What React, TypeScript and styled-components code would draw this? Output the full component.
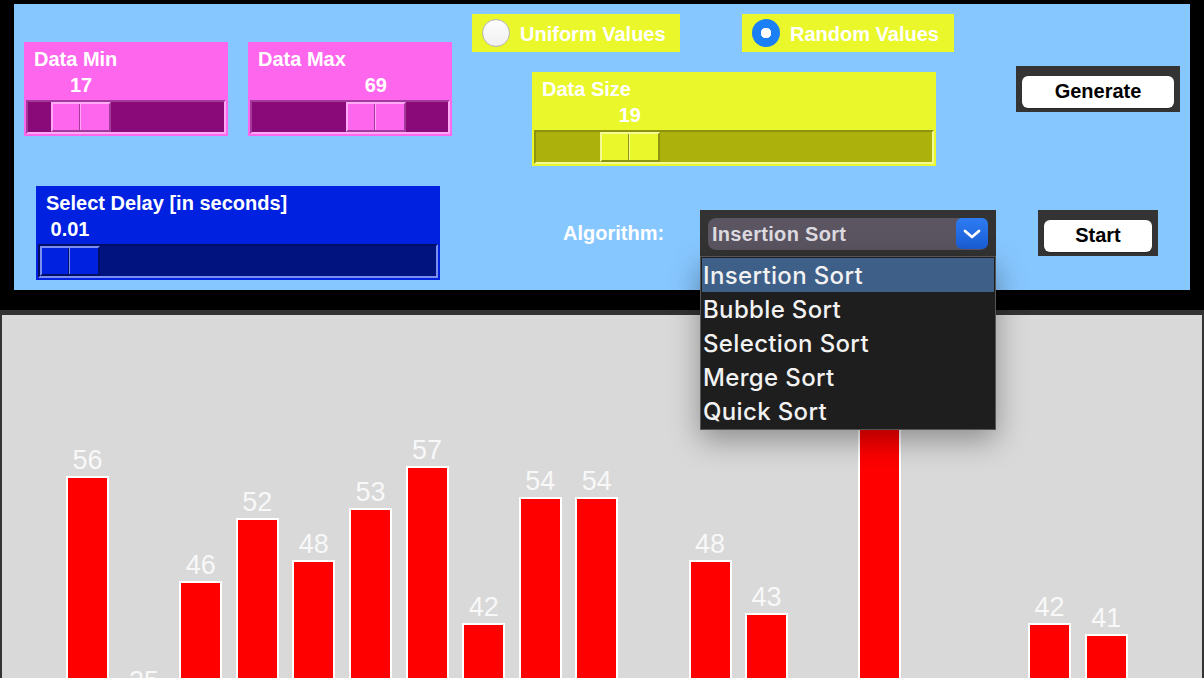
import React from "react";
import styled, { createGlobalStyle, css } from "styled-components";

const GlobalStyle = createGlobalStyle`
  html, body {
    margin: 0;
    padding: 0;
    background: #000;
    overflow: hidden;
    width: 1204px;
    height: 678px;
  }
  * { box-sizing: border-box; }
`;

type Tone = "pink" | "yellow" | "blue";

const tones: Record<Tone, { face: string; trough: string; dark: string; light: string }> = {
  pink: { face: "#ff66ee", trough: "#8b0a7a", dark: "#a2399b", light: "#ffaaf7" },
  yellow: { face: "#eaf72a", trough: "#acb20b", dark: "#8e9310", light: "#f4fb94" },
  blue: { face: "#0022e0", trough: "#00137f", dark: "#000f66", light: "#7b8ff2" },
};

const boldFont = css`
  font-family: "Liberation Sans", Arial, sans-serif;
  font-weight: 700;
  font-size: 20px;
  line-height: 23px;
`;

const Screen = styled.div`
  width: 1204px;
  height: 678px;
  background: #000;
  padding-top: 4px;
  overflow: hidden;
`;

const Panel = styled.div`
  margin: 0 14px;
  height: 286px;
  background: #87c7ff;
  display: flex;
  flex-direction: column;
`;

const TopRow = styled.div`
  display: flex;
  align-items: flex-start;
  height: 162px;
`;

const BottomRow = styled.div`
  display: flex;
  align-items: flex-start;
  margin-top: 20px;
`;

const MinMaxGroup = styled.div`
  display: flex;
  gap: 20px;
  margin: 38px 0 0 10px;
`;

const MiddleColumn = styled.div`
  width: 482px;
  margin: 10px 0 0 20px;
  display: flex;
  flex-direction: column;
`;

const RadioRow = styled.div`
  display: flex;
  justify-content: space-between;
`;

const SizeWrap = styled.div`
  margin: 20px 0 0 60px;
`;

const DelayWrap = styled.div`
  margin-left: 22px;
`;

/* ---------- slider ---------- */

const SliderBox = styled.div<{ $tone: Tone; $width: number }>`
  width: ${(p) => p.$width}px;
  height: 94px;
  background: ${(p) => tones[p.$tone].face};
  padding: 6px 2px 2px;
  display: flex;
  flex-direction: column;
  color: #fff;
`;

const SliderTitle = styled.div`
  ${boldFont};
  padding-left: 8px;
  white-space: nowrap;
`;

const ValueRow = styled.div`
  height: 29px;
  padding: 0 2px;
  display: flex;
  align-items: center;
`;

const ValueCell = styled.div`
  ${boldFont};
  width: 60px;
  text-align: center;
`;

const Trough = styled.div<{ $tone: Tone }>`
  height: 34px;
  border: 2px solid;
  border-color: ${(p) => `${tones[p.$tone].dark} ${tones[p.$tone].light} ${tones[p.$tone].light} ${tones[p.$tone].dark}`};
  background: ${(p) => tones[p.$tone].trough};
  display: flex;
`;

const Handle = styled.div<{ $tone: Tone }>`
  position: relative;
  width: 60px;
  height: 100%;
  background: ${(p) => tones[p.$tone].face};
  border: 2px solid;
  border-color: ${(p) => `${tones[p.$tone].light} ${tones[p.$tone].dark} ${tones[p.$tone].dark} ${tones[p.$tone].light}`};
  &::after {
    content: "";
    position: absolute;
    top: 0;
    bottom: 0;
    left: 26px;
    width: 1px;
    background: ${(p) => tones[p.$tone].dark};
    box-shadow: 1px 0 0 ${(p) => tones[p.$tone].light};
  }
`;

function Slider(props: { tone: Tone; width: number; title: string; value: string; fraction: number }) {
  const offset = `calc((100% - 60px) * ${props.fraction})`;
  return (
    <SliderBox $tone={props.tone} $width={props.width}>
      <SliderTitle>{props.title}</SliderTitle>
      <ValueRow>
        <ValueCell style={{ marginLeft: offset }}>{props.value}</ValueCell>
      </ValueRow>
      <Trough $tone={props.tone}>
        <Handle $tone={props.tone} style={{ marginLeft: offset }} />
      </Trough>
    </SliderBox>
  );
}

/* ---------- radio ---------- */

const RadioBox = styled.div<{ $width: number }>`
  width: ${(p) => p.$width}px;
  height: 38px;
  background: #eaf72a;
  display: flex;
  align-items: center;
  gap: 10px;
  padding: 2px 0 0 10px;
  color: #fff;
  ${boldFont};
  white-space: nowrap;
`;

const RadioDot = styled.span<{ $checked: boolean }>`
  width: 28px;
  height: 28px;
  margin-top: -2px;
  border-radius: 50%;
  flex: none;
  ${(p) =>
    p.$checked
      ? css`
          background: radial-gradient(circle, #fff 0 5px, #1b7ff6 5.5px);
        `
      : css`
          background: linear-gradient(180deg, #fdfdfd, #f0f0f0);
          border: 1px solid #b5b5b5;
        `}
`;

function Radio(props: { width: number; label: string; checked: boolean }) {
  return (
    <RadioBox $width={props.width}>
      <RadioDot $checked={props.checked} />
      {props.label}
    </RadioBox>
  );
}

/* ---------- buttons ---------- */

const ButtonFrame = styled.div<{ $width: number; $top: number; $left: number }>`
  width: ${(p) => p.$width}px;
  height: 46px;
  margin: ${(p) => p.$top}px 0 0 ${(p) => p.$left}px;
  background: #343434;
  padding: 10px 6px 4px;
`;

const PushButton = styled.button`
  width: 100%;
  height: 32px;
  border: none;
  border-radius: 6px;
  background: #fff;
  color: #000;
  ${boldFont};
  padding: 0 0 2px;
  display: flex;
  align-items: center;
  justify-content: center;
  box-shadow: 0 0.5px 1px rgba(0, 0, 0, 0.25);
`;

/* ---------- algorithm select ---------- */

const AlgoLabel = styled.div`
  ${boldFont};
  color: #fff;
  width: 137px;
  margin: 36px 0 0 123px;
  white-space: nowrap;
`;

const SelectWrap = styled.div`
  position: relative;
  margin-top: 24px;
  width: 296px;
  height: 46px;
  background: #333;
  padding: 8px 8px 6px;
`;

const SelectField = styled.div`
  height: 32px;
  border-radius: 8px;
  background: #5a5560;
  display: flex;
  align-items: center;
  justify-content: space-between;
  padding-left: 4px;
  color: #dedbe0;
  ${boldFont};
  letter-spacing: 0.3px;
  white-space: nowrap;
`;

const Chevron = styled.div`
  width: 32px;
  height: 31px;
  margin-top: -1px;
  border-radius: 6px;
  background: linear-gradient(180deg, #2e7bf2, #1a5ed6);
  display: flex;
  align-items: center;
  justify-content: center;
`;

const Menu = styled.ul`
  position: absolute;
  top: 46px;
  left: 0;
  width: 296px;
  height: 174px;
  margin: 0;
  padding: 1px;
  list-style: none;
  background: #1e1e1e;
  border: 1px solid #555;
  box-shadow: 0 10px 28px rgba(0, 0, 0, 0.35);
  z-index: 5;
`;

const MenuItem = styled.li<{ $active?: boolean }>`
  height: 34px;
  display: flex;
  align-items: center;
  padding-left: 1px;
  font-family: Inter, "Noto Sans", sans-serif;
  font-size: 24px;
  font-weight: 500;
  letter-spacing: 0.35px;
  color: #f2f2f2;
  background: ${(p) => (p.$active ? "#3e5f88" : "transparent")};
  white-space: nowrap;
`;

/* ---------- chart ---------- */

const Chart = styled.div`
  margin-top: 20px;
  height: 754px;
  background: #d9d9d9;
  border-top: 5px solid #333;
  border-left: 2px solid #333;
  border-right: 2px solid #333;
  padding-left: 64px;
  display: flex;
  align-items: flex-end;
  gap: 13.6px;
`;

const BarColumn = styled.div`
  width: 43px;
  flex: none;
  display: flex;
  flex-direction: column;
  align-items: center;
`;

const BarLabel = styled.div`
  font-family: "Liberation Sans", Arial, sans-serif;
  font-size: 27px;
  line-height: 31px;
  color: #f8f8f8;
  white-space: nowrap;
`;

const BarRect = styled.div<{ $value: number }>`
  width: 43px;
  height: ${(p) => p.$value * 10.5}px;
  background: #ff0000;
  border: 2px solid #fff;
  border-bottom: none;
`;

const data = [56, 35, 46, 52, 48, 53, 57, 42, 54, 54, 22, 48, 43, 27, 65, 18, 30, 42, 41];

const algorithms = ["Insertion Sort", "Bubble Sort", "Selection Sort", "Merge Sort", "Quick Sort"];

export default function App() {
  return (
    <>
      <GlobalStyle />
      <Screen>
        <Panel>
          <TopRow>
            <MinMaxGroup>
              <Slider tone="pink" width={204} title="Data Min" value="17" fraction={0.17} />
              <Slider tone="pink" width={204} title="Data Max" value="69" fraction={0.69} />
            </MinMaxGroup>
            <MiddleColumn>
              <RadioRow>
                <Radio width={208} label="Uniform Values" checked={false} />
                <Radio width={212} label="Random Values" checked={true} />
              </RadioRow>
              <SizeWrap>
                <Slider tone="yellow" width={404} title="Data Size" value="19" fraction={0.19} />
              </SizeWrap>
            </MiddleColumn>
            <ButtonFrame $width={164} $top={62} $left={62}>
              <PushButton>Generate</PushButton>
            </ButtonFrame>
          </TopRow>
          <BottomRow>
            <DelayWrap>
              <Slider tone="blue" width={404} title="Select Delay [in seconds]" value="0.01" fraction={0} />
            </DelayWrap>
            <AlgoLabel>Algorithm:</AlgoLabel>
            <SelectWrap>
              <SelectField>
                Insertion Sort
                <Chevron>
                  <svg width="18" height="10" viewBox="0 0 18 10">
                    <path d="M2 2 L9 8 L16 2" fill="none" stroke="#fff" strokeWidth="2.8" strokeLinecap="round" strokeLinejoin="round" />
                  </svg>
                </Chevron>
              </SelectField>
              <Menu>
                {algorithms.map((a, i) => (
                  <MenuItem key={a} $active={i === 0}>
                    {a}
                  </MenuItem>
                ))}
              </Menu>
            </SelectWrap>
            <ButtonFrame $width={120} $top={24} $left={42}>
              <PushButton>Start</PushButton>
            </ButtonFrame>
          </BottomRow>
        </Panel>
        <Chart>
          {data.map((v, i) => (
            <BarColumn key={i}>
              <BarLabel>{v}</BarLabel>
              <BarRect $value={v} />
            </BarColumn>
          ))}
        </Chart>
      </Screen>
    </>
  );
}
